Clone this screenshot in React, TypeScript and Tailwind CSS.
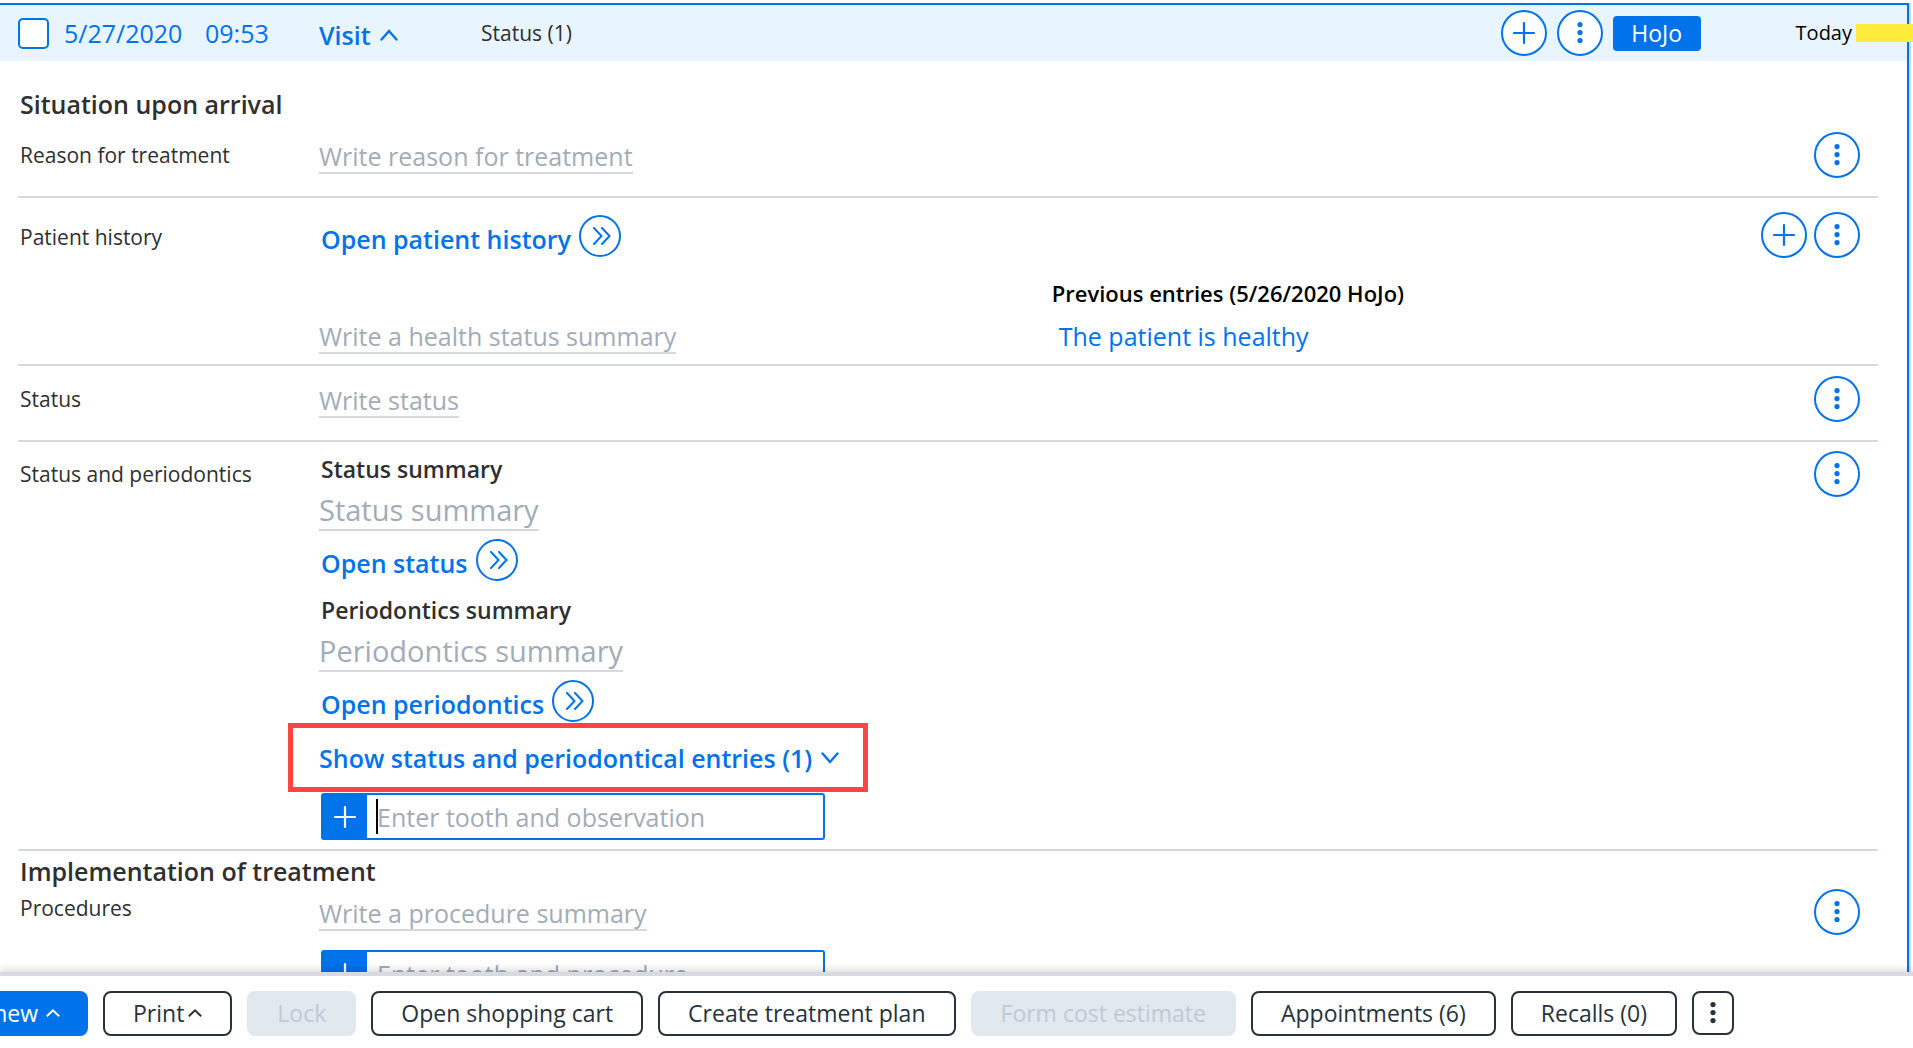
import type { ReactNode } from "react";
import clsx from "clsx";

function PlusIcon({ className }: { className?: string }) {
  return (
    <svg viewBox="0 0 24 24" className={className} fill="none" stroke="currentColor" strokeWidth="2.2" strokeLinecap="round" aria-hidden="true">
      <path d="M12 2v20M2 12h20" />
    </svg>
  );
}

function DotsIcon({ className }: { className?: string }) {
  return (
    <svg viewBox="0 0 24 24" className={className} fill="currentColor" aria-hidden="true">
      <circle cx="12" cy="3.6" r="2.6" />
      <circle cx="12" cy="11.6" r="2.6" />
      <circle cx="12" cy="19.6" r="2.6" />
    </svg>
  );
}

function ChevronIcon({ up = false, className }: { up?: boolean; className?: string }) {
  return (
    <svg viewBox="0 0 20 12" className={className} fill="none" stroke="currentColor" strokeWidth="2.4" strokeLinecap="round" aria-hidden="true">
      <path d={up ? "M2.5 10.5 10 2l7.5 8.5" : "M2.5 1.5 10 10l7.5-8.5"} />
    </svg>
  );
}

function SmallChevronUp() {
  return (
    <svg viewBox="0 0 14 8" className="h-2 w-3.5 shrink-0" fill="none" stroke="currentColor" strokeWidth="2" aria-hidden="true">
      <path d="M.8 7.300 7 1.400l6.200 5.900" />
    </svg>
  );
}

function RoundButton({ icon, label }: { icon: "plus" | "dots"; label: string }) {
  return (
    <button
      type="button"
      aria-label={label}
      className="flex size-[46px] shrink-0 items-center justify-center rounded-full border-2 border-[#0073ea] bg-white text-[#0073ea]"
    >
      {icon === "plus" ? <PlusIcon className="size-6" /> : <DotsIcon className="size-6" />}
    </button>
  );
}

function OpenLink({ children }: { children: ReactNode }) {
  return (
    <a href="#" className="flex w-fit items-end gap-2 pl-0.5 text-[25px] leading-8 font-semibold text-[#0073ea]">
      <span className="pb-0.5">{children}</span>
      <span className="flex size-[42px] items-center justify-center rounded-full border-2 border-[#0073ea]">
        <svg viewBox="0 0 20 18" className="ml-1 h-[18px] w-5" fill="none" stroke="currentColor" strokeWidth="2" strokeLinecap="round" aria-hidden="true">
          <path d="m2 1 7.500 8L2 17M10 1l7.500 8-7.500 8" />
        </svg>
      </span>
    </a>
  );
}

function LineInput({ placeholder, large = false }: { placeholder: string; large?: boolean }) {
  return (
    <input
      type="text"
      aria-label={placeholder}
      placeholder={placeholder}
      className={clsx(
        "block field-sizing-content justify-self-start border-b-2 border-[#d3d9df] bg-transparent p-0 outline-none placeholder:text-[#a2acb7]",
        large ? "h-[42px] text-[29px] leading-10" : "h-[34px] text-[25px] leading-8",
      )}
    />
  );
}

function ToothInput({ placeholder, focused = false }: { placeholder: string; focused?: boolean }) {
  return (
    <div className="relative ml-0.5 flex h-[47px] w-[504px] rounded-[3px] border-2 border-[#0073ea] bg-white">
      <button type="button" aria-label="Add" className="flex w-11 shrink-0 items-center justify-center bg-[#0073ea] text-white">
        <PlusIcon className="size-6" />
      </button>
      {focused && <span className="absolute top-1 left-[53px] h-[35px] w-0.5 bg-black" />}
      <input
        type="text"
        aria-label={placeholder}
        placeholder={placeholder}
        className="min-w-0 flex-1 bg-transparent pl-2.5 text-[25px] leading-8 outline-none placeholder:text-[#a2acb7]"
      />
    </div>
  );
}

interface RowProps {
  label: string;
  className: string;
  labelClassName?: string;
  contentClassName?: string;
  canAdd?: boolean;
  children: ReactNode;
}

function Row({ label, className, labelClassName = "pt-[9px]", contentClassName, canAdd = false, children }: RowProps) {
  return (
    <div className={clsx("mr-[29px] ml-[18px] flex items-start border-b-2 border-[#d3d9df]", className)}>
      <div className={clsx("w-[301px] shrink-0 pl-0.5 text-[21px] leading-7", labelClassName)}>{label}</div>
      <div className={clsx("min-w-0 flex-1", contentClassName)}>{children}</div>
      <div className="mr-[18px] flex gap-[7px]">
        {canAdd && <RoundButton icon="plus" label={`Add to ${label}`} />}
        <RoundButton icon="dots" label={`${label} menu`} />
      </div>
    </div>
  );
}

function SectionTitle({ children, className }: { children: ReactNode; className: string }) {
  return <h2 className={clsx("pl-5 text-[25px] leading-8 font-semibold", className)}>{children}</h2>;
}

function FooterButton({ children, disabled = false }: { children: ReactNode; disabled?: boolean }) {
  return (
    <button
      type="button"
      disabled={disabled}
      className={clsx(
        "flex h-[45px] shrink-0 items-center gap-1 rounded-lg border-2 px-7 pb-0.5 text-[23px] leading-8 whitespace-nowrap",
        disabled ? "border-[#e1e8ee] bg-[#e1e8ee] text-[#bfcad7]" : "border-[#27323d] bg-white text-[#27323d]",
      )}
    >
      {children}
    </button>
  );
}

export default function App() {
  return (
    <div className="flex h-screen flex-col overflow-hidden bg-white font-['Open_Sans','Noto_Sans',sans-serif] text-[#2f2f2f]">
      <main className="min-h-0 flex-1 overflow-hidden pt-[3px]">
        <div className="mr-0.5 border-r-2 border-[#d3d9df]">
          <section className="border-t-2 border-r-2 border-[#0073ea]">
            <header className="flex h-14 items-center bg-[#e8f5ff] pl-[18px] text-[#0073ea]">
              <input
                type="checkbox"
                aria-label="Select visit"
                className="size-[31px] appearance-none rounded-[5px] border-2 border-[#0073ea] bg-white"
              />
              <span className="ml-[15px] w-[141px] text-[25px] leading-8">5/27/2020</span>
              <span className="w-[114px] text-[25px] leading-8">09:53</span>
              <button type="button" className="flex w-[162px] items-center gap-2 pt-1 text-[25px] leading-8 font-semibold">
                Visit
                <ChevronIcon up className="h-3 w-5" />
              </button>
              <span className="text-[21px] leading-7 text-[#2f2f2f]">Status (1)</span>
              <div className="ml-auto flex items-center gap-2.5">
                <RoundButton icon="plus" label="Add entry" />
                <RoundButton icon="dots" label="Visit menu" />
                <button type="button" className="h-[35px] w-[88px] rounded-[4px] bg-[#0073ea] text-[23px] leading-8 text-white">
                  HoJo
                </button>
              </div>
              <span className="ml-[95px] text-[20px] leading-7 text-black">Today</span>
              <span className="relative -mr-1.5 ml-1 h-[18px] w-[57px] bg-[#ffeb3b]" />
            </header>

            <SectionTitle className="pt-[27px]">Situation upon arrival</SectionTitle>
            <Row label="Reason for treatment" className="min-h-[78px] pt-3" contentClassName="pt-2">
              <LineInput placeholder="Write reason for treatment" />
            </Row>

            <Row label="Patient history" className="pt-[14px]" labelClassName="pt-[11px]" contentClassName="pt-[3px] pb-2.5" canAdd>
              <OpenLink>Open patient history</OpenLink>
              {/* the second column reaches under the row's buttons */}
              <div className="-mr-[117px] grid grid-cols-[47%_1fr] items-end pt-[22px]">
                <LineInput placeholder="Write a health status summary" />
                <div>
                  <p className="text-[22px] leading-7 font-semibold text-black">Previous entries (5/26/2020 HoJo)</p>
                  <a href="#" className="mt-[13px] mb-0.5 block pl-[7px] text-[25px] leading-8 text-[#0073ea]">
                    The patient is healthy
                  </a>
                </div>
              </div>
            </Row>

            <Row label="Status" className="min-h-[76px] pt-2.5" contentClassName="pt-2">
              <LineInput placeholder="Write status" />
            </Row>

            <Row label="Status and periodontics" className="pt-[9px]" contentClassName="pt-0.5 pb-[9px]">
              <h3 className="mb-1 pl-0.5 text-[23px] leading-8 font-semibold">Status summary</h3>
              <LineInput placeholder="Status summary" large />
              <div className="pt-2 pb-[13px]">
                <OpenLink>Open status</OpenLink>
              </div>
              <h3 className="mb-1 pl-0.5 text-[23px] leading-8 font-semibold">Periodontics summary</h3>
              <LineInput placeholder="Periodontics summary" large />
              <div className="pt-2 pb-px">
                <OpenLink>Open periodontics</OpenLink>
              </div>
              <div className="mb-px -ml-[31px] flex h-[69px] w-[580px] items-center border-[5px] border-[#ff4444] pl-[26px]">
                <button type="button" className="flex items-center gap-2 text-[25px] leading-8 font-semibold whitespace-nowrap text-[#0073ea]">
                  Show status and periodontical entries (1)
                  <ChevronIcon className="h-3 w-5" />
                </button>
              </div>
              <ToothInput placeholder="Enter tooth and observation" focused />
            </Row>

            <SectionTitle className="pt-1">Implementation of treatment</SectionTitle>
            <Row label="Procedures" className="pt-0.5 pb-10" labelClassName="pt-[5px]" contentClassName="pt-2">
              <LineInput placeholder="Write a procedure summary" />
              <div className="pt-[19px]">
                <ToothInput placeholder="Enter tooth and procedure" />
              </div>
            </Row>
          </section>
        </div>
      </main>

      <footer className="relative flex h-[76px] shrink-0 items-start gap-[15px] border-t-4 border-[#d7dade] bg-white pt-[15px] shadow-[0_-2px_8px_rgba(0,0,0,0.16)]">
        {/* runs off the left edge of the window */}
        <button
          type="button"
          className="flex h-[45px] w-[88px] shrink-0 items-center justify-end gap-2 rounded-r-lg bg-[#0073ea] pr-7 pb-0.5 text-[23px] leading-8 whitespace-nowrap text-white"
        >
          new
          <SmallChevronUp />
        </button>
        <FooterButton>
          Print
          <SmallChevronUp />
        </FooterButton>
        <FooterButton disabled>Lock</FooterButton>
        <FooterButton>Open shopping cart</FooterButton>
        <FooterButton>Create treatment plan</FooterButton>
        <FooterButton disabled>Form cost estimate</FooterButton>
        <FooterButton>Appointments (6)</FooterButton>
        <FooterButton>Recalls (0)</FooterButton>
        <button
          type="button"
          aria-label="More actions"
          className="flex h-11 w-[42px] shrink-0 items-center justify-center rounded-lg border-2 border-[#27323d] bg-white text-[#27323d]"
        >
          <DotsIcon className="size-6" />
        </button>
      </footer>
    </div>
  );
}
